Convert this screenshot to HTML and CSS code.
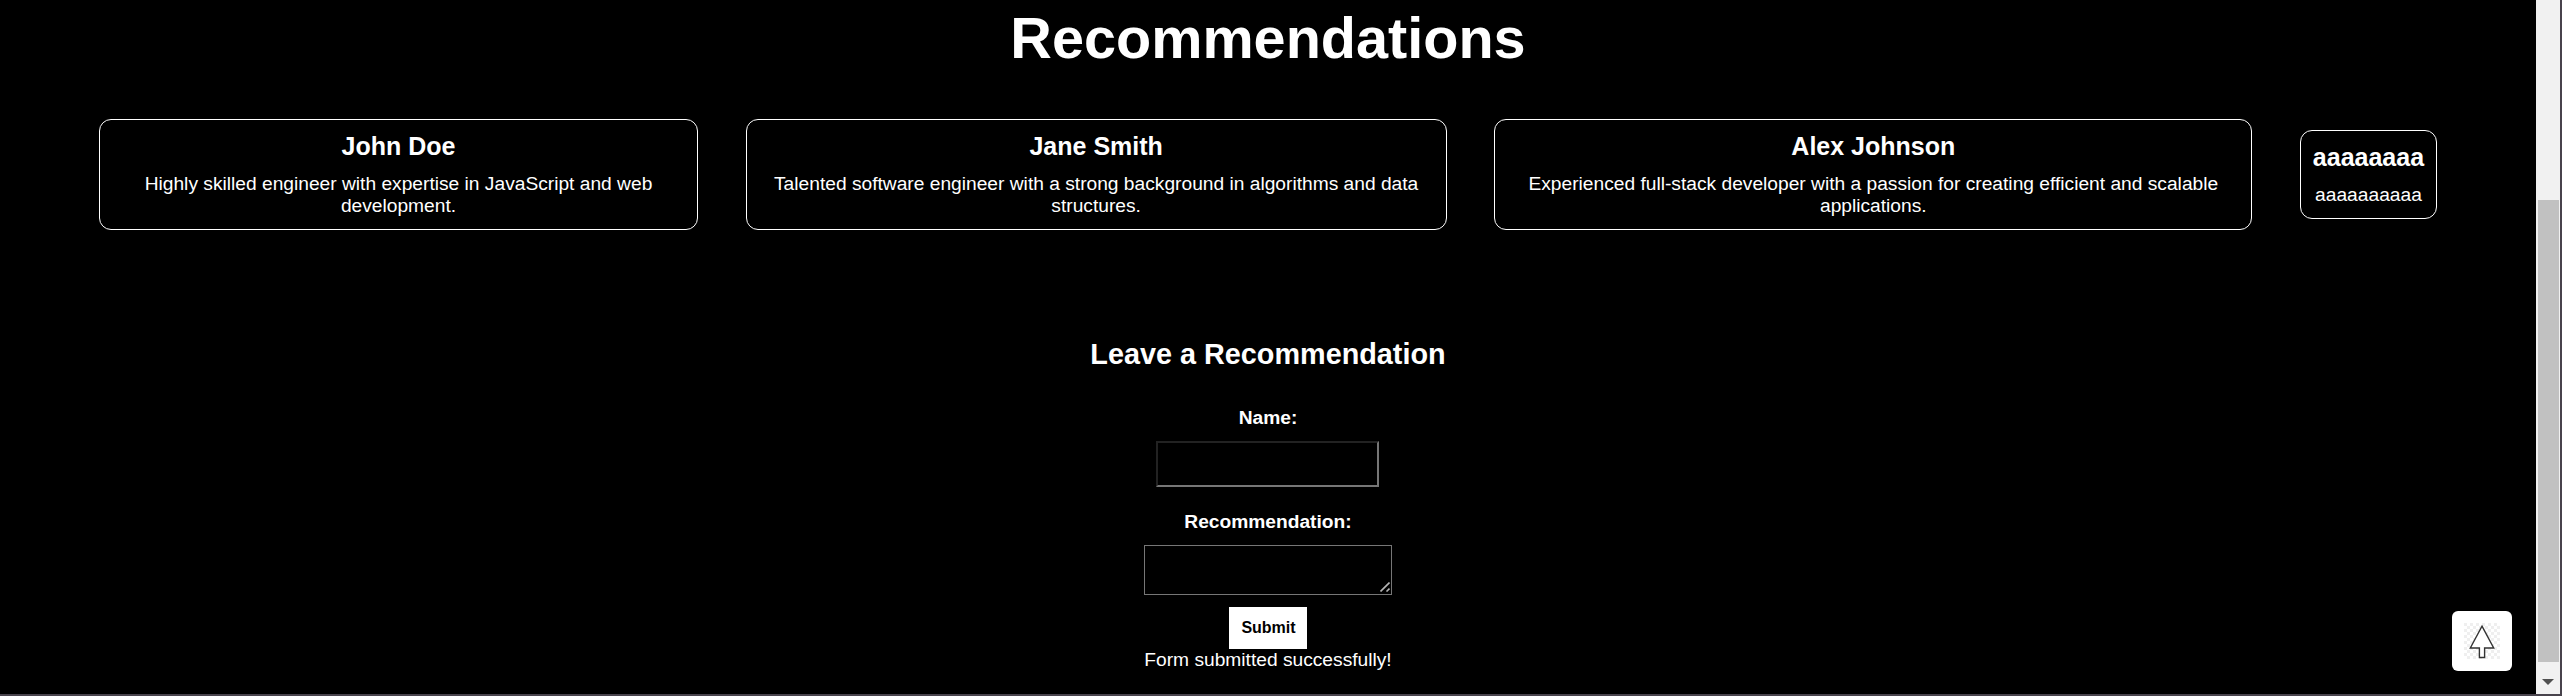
FILE: index.html
```
<!DOCTYPE html>
<html lang="en">
<head>
<meta charset="utf-8">
<title>Recommendations</title>
<link rel="stylesheet" href="styles.css">
</head>
<body>
<div class="window">
  <main class="page">
    <h1 class="title">Recommendations</h1>
    <section class="cards">
      <article class="card john"><h3 class="name">John Doe</h3><p class="text">Highly skilled engineer with expertise in JavaScript and web development.</p></article>
      <article class="card jane"><h3 class="name">Jane Smith</h3><p class="text">Talented software engineer with a strong background in algorithms and data structures.</p></article>
      <article class="card alex"><h3 class="name">Alex Johnson</h3><p class="text">Experienced full-stack developer with a passion for creating efficient and scalable applications.</p></article>
      <article class="card short"><h3 class="name">aaaaaaaa</h3><p class="text">aaaaaaaaaa</p></article>
    </section>
    <form class="form">
      <h2 class="subtitle">Leave a Recommendation</h2>
      <label class="label" for="name">Name:</label>
      <input class="input" id="name" type="text">
      <label class="label" for="rec">Recommendation:</label>
      <div class="area-wrap">
        <textarea class="area" id="rec"></textarea>
        <svg class="grip" viewBox="0 0 10 10"><path d="M0.5 9.5L9.5 0.5M6.5 9.5L9.5 6.5" stroke="#b4b4b4" stroke-width="1.6"/></svg>
      </div>
      <button class="submit" type="button">Submit</button>
      <p class="status">Form submitted successfully!</p>
    </form>
  </main>
  <div class="scrollbar">
    <div class="thumb"></div>
    <svg class="down" viewBox="0 0 12 6"><path d="M0 0H12L6 6Z"/></svg>
  </div>
  <a class="to-top" href="#">
    <svg class="arrow" viewBox="0 0 36 36">
      <defs><pattern id="check" width="6" height="6" patternUnits="userSpaceOnUse"><path d="M0 0h3v3H0zM3 3h3v3H3z" fill="#efefef"/></pattern></defs>
      <rect width="36" height="36" fill="url(#check)"/>
      <path d="M18 3.2L29.7 25H20.6V34.5H15.4V25H6.3Z" fill="#fff" stroke="#333" stroke-width="1.4"/>
    </svg>
  </a>
</div>
</body>
</html>
```
FILE: styles.css
```
* { box-sizing: border-box; }
body { margin: 0; background: #48434c; font-family: "Liberation Sans", Arial, sans-serif; font-size: 19.2px; line-height: 22px; color: #fff; }
h1, h2, h3, p { margin: 0; }
.window { position: relative; display: flex; width: 2560px; height: 694px; background: #000; }
.page { width: 2536px; padding-top: 5px; }
.title { font-size: 57.6px; line-height: 66px; text-align: center; }
.cards { display: flex; align-items: center; justify-content: space-between; margin: 48px 99px 0; height: 111px; }
.card { padding: 12px; border: 1px solid #fff; border-radius: 12px; text-align: center; }
.john { width: 599px; padding: 12px 24px; }
.jane { width: 701px; }
.alex { width: 758px; }
.short { width: 137px; padding: 12px 11px; }
.name { font-size: 25px; line-height: 29px; margin-bottom: 12px; }
.form { display: flex; flex-direction: column; align-items: center; padding-top: 108px; }
.subtitle { font-size: 28.8px; line-height: 32px; margin-bottom: 37px; }
.label { font-weight: 700; margin-bottom: 12px; }
.input { width: 223px; height: 46px; margin: 0 1px 24px 0; background: #000; border: 2px solid; border-color: #222 #767676 #767676 #222; color: #fff; }
.area-wrap { position: relative; width: 248px; height: 50px; margin-bottom: 12px; }
.area { display: block; width: 100%; height: 100%; margin: 0; background: #000; border: 1px solid #767676; color: #fff; resize: none; }
.grip { position: absolute; right: 2px; bottom: 3px; width: 10px; height: 10px; }
.submit { width: 78px; height: 42px; padding: 12px 11px 12px 12px; border: 0; background: #fff; color: #000; font: 700 16px/18px "Liberation Sans", Arial, sans-serif; }
.scrollbar { display: flex; flex-direction: column; align-items: center; width: 24px; height: 694px; padding-top: 200px; background: #f1f1f1; }
.thumb { width: 21px; height: 462px; background: #c1c1c1; }
.down { width: 12px; height: 6px; margin-top: 17px; fill: #505050; }
.to-top { position: absolute; left: 2452px; top: 611px; width: 60px; height: 60px; padding: 12px; border-radius: 6px; background: #fff; }
.arrow { display: block; width: 36px; height: 36px; }
```
